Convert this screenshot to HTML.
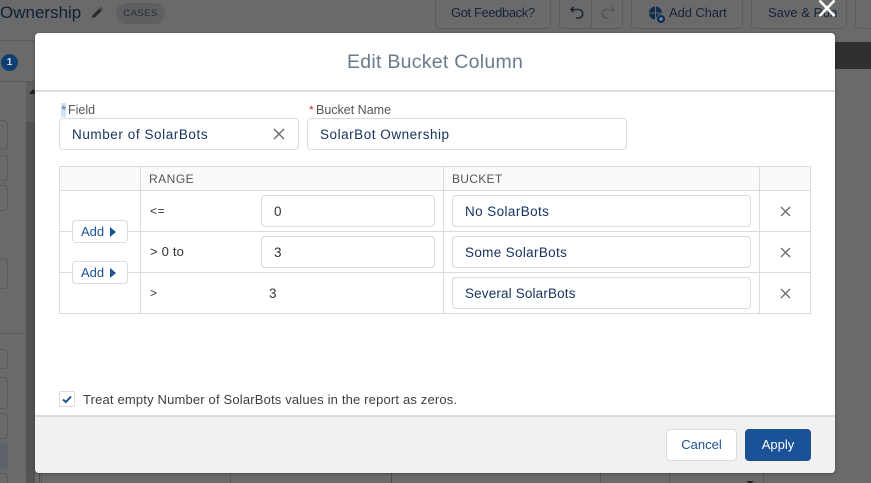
<!DOCTYPE html>
<html><head><meta charset="utf-8">
<style>
html,body{margin:0;padding:0;width:871px;height:483px;overflow:hidden}
#w{position:relative;width:871px;height:483px;overflow:hidden;background:#6a6a6a;font-family:"Liberation Sans",sans-serif;color:#16325c}
.a{position:absolute;white-space:nowrap}
.bb{position:absolute;border:1px solid #5c5c5c;border-radius:4px;box-sizing:border-box}
.t{position:absolute;white-space:nowrap;line-height:16px;font-size:13.5px}
.inp{position:absolute;box-sizing:border-box;border:1px solid #dddbda;border-radius:4px;background:#fff;height:32px}
.l{position:absolute;background:#dddbda}
.add{position:absolute;box-sizing:border-box;left:72px;width:56px;height:23px;background:#fff;border:1px solid #dddbda;border-radius:4px;color:#1b5297;font-size:13px;line-height:21px;padding-left:8px}
.add i{position:absolute;left:37px;top:5.500px;border-left:6.500px solid #1b5297;border-top:5px solid transparent;border-bottom:5px solid transparent}
svg{position:absolute;display:block}
</style></head><body><div id="w">
<!-- background page -->
<div class="a" style="left:0;top:1px;font-size:17px;line-height:24px;color:#0f2038">Ownership</div>
<svg style="left:91px;top:6px" width="13" height="13" viewBox="0 0 13 13"><path d="M1 12l.7-3L8.500 2.200l2.300 2.300L4 11.300zM9.300 1.400l.7-.4 2 2-.4.700z" fill="#2a2a2a"/></svg>
<div class="a" style="left:116px;top:3px;width:49px;height:21px;border-radius:11px;background:#5f5f5f;color:#252f3e;font-size:9.500px;line-height:21px;text-align:center;letter-spacing:.4px">CASES</div>
<div class="bb" style="left:435px;top:-5px;width:116px;height:34px"></div>
<div class="a" style="left:451px;top:5px;font-size:13px;line-height:16px;color:#16253c;letter-spacing:-.4px">Got Feedback?</div>
<div class="bb" style="left:559px;top:-5px;width:64px;height:34px"></div>
<div class="a" style="left:591px;top:0;width:1px;height:28px;background:#5c5c5c"></div>
<svg style="left:568px;top:5px" width="18" height="18" viewBox="0 0 18 18" fill="none" stroke="#1f2731" stroke-width="1.600"><path d="M3 4.500h7.500a4 4 0 0 1 0 8.500H8M5.500 2L3 4.500 5.500 7"/></svg>
<svg style="left:599px;top:5px" width="18" height="18" viewBox="0 0 18 18" fill="none" stroke="#585858" stroke-width="1.600"><path d="M15 4.500H7.500a4 4 0 0 0 0 8.500H10M12.500 2L15 4.500 12.500 7"/></svg>
<div class="bb" style="left:631px;top:-5px;width:112px;height:34px"></div>
<svg style="left:648px;top:6px" width="18" height="18" viewBox="0 0 18 18"><circle cx="7.500" cy="7" r="6.500" fill="#0f2c52"/><path d="M7.500 0v14M1 7h13" stroke="#6a6a6a" stroke-width="1"/><circle cx="13" cy="13" r="4.500" fill="#0f2c52" stroke="#6a6a6a"/><path d="M11 13h4M13 11v4" stroke="#9ab" stroke-width="1"/></svg>
<div class="a" style="left:669px;top:5px;font-size:13px;line-height:16px;color:#16253c;letter-spacing:-.1px">Add Chart</div>
<div class="bb" style="left:751px;top:-5px;width:96px;height:34px"></div>
<div class="a" style="left:768px;top:5px;font-size:13px;line-height:16px;color:#16253c">Save &amp; Run</div>
<div class="bb" style="left:855px;top:-5px;width:30px;height:34px"></div>
<div class="a" style="left:0;top:40px;width:35px;height:1px;background:#5c5c5c"></div>
<div class="a" style="left:835px;top:42px;width:36px;height:27px;background:#303030"></div>
<div class="a" style="left:0;top:81px;width:35px;height:1px;background:#5a5a5a"></div>
<div class="a" style="left:1px;top:54px;width:17px;height:17px;border-radius:50%;background:#0e3f72;color:#cfd6df;font-size:10px;font-weight:bold;line-height:17px;text-align:center">1</div>
<div class="a" style="left:26px;top:82px;width:9px;height:401px;background:#5e5e5e"></div>
<div class="a" style="left:26px;top:122px;width:9px;height:361px;background:#535353"></div>
<div class="a" style="left:29px;top:89px;border-left:4px solid transparent;border-right:4px solid transparent;border-bottom:5px solid #222"></div>
<div class="bb" style="left:-6px;top:120px;width:14px;height:30px;border-color:#5a5a5a"></div>
<div class="bb" style="left:-6px;top:155px;width:14px;height:26px;border-color:#5a5a5a"></div>
<div class="bb" style="left:-6px;top:185px;width:14px;height:26px;border-color:#5a5a5a"></div>
<div class="bb" style="left:-6px;top:258px;width:14px;height:31px;border-color:#5a5a5a"></div>
<div class="a" style="left:0;top:333px;width:24px;height:1px;background:#5a5a5a"></div>
<div class="bb" style="left:-6px;top:349px;width:14px;height:20px;border-color:#5a5a5a"></div>
<div class="bb" style="left:-6px;top:377px;width:14px;height:32px;border-color:#5a5a5a"></div>
<div class="bb" style="left:-6px;top:413px;width:14px;height:26px;border-color:#5a5a5a"></div>
<div class="bb" style="left:-6px;top:443px;width:14px;height:26px;background:#5d6368;border-color:#5d6368"></div>
<div class="bb" style="left:-6px;top:473px;width:14px;height:26px;border-color:#5a5a5a"></div>
<div class="a" style="left:39px;top:473px;width:1px;height:10px;background:#505050"></div>
<div class="a" style="left:41px;top:473px;width:1px;height:10px;background:#5a5a5a"></div>
<div class="a" style="left:230px;top:473px;width:1px;height:10px;background:#5a5a5a"></div>
<div class="a" style="left:391px;top:473px;width:1px;height:10px;background:#4c4c4c"></div>
<div class="a" style="left:600px;top:473px;width:1px;height:10px;background:#5a5a5a"></div>
<div class="a" style="left:669px;top:473px;width:1px;height:10px;background:#5a5a5a"></div>
<div class="a" style="left:746px;top:481px;border-left:4px solid transparent;border-right:4px solid transparent;border-top:3px solid #222"></div>
<div class="a" style="left:763px;top:473px;width:1px;height:10px;background:#5a5a5a"></div>

<!-- modal -->
<div class="a" style="left:35px;top:33px;width:800px;height:440px;background:#fff;border-radius:4px;box-shadow:0 1px 3px rgba(0,0,0,.3)"></div>
<svg style="left:817px;top:-1px" width="20" height="20" viewBox="0 0 20 20"><path d="M2.500 1.500L17.500 17M17.500 1.500L2.500 17" stroke="#fff" stroke-width="2.600"/></svg>
<div class="a" style="left:35px;top:90px;width:800px;height:2px;background:#dddbda"></div>
<div class="a" style="left:347px;top:50px;font-size:19.500px;line-height:24px;color:#6a7a8e;letter-spacing:.27px">Edit Bucket Column</div>

<div class="a" style="left:61px;top:103px;width:5px;height:14px;background:#cfe4f7"></div>
<div class="t" style="left:61.500px;top:102px;font-size:12px;color:#54698d">*</div>
<div class="t" style="left:68px;top:102px;font-size:12.500px;color:#555">Field</div>
<div class="t" style="left:309px;top:102px;font-size:12px;color:#c23934">*</div>
<div class="t" style="left:316px;top:102px;font-size:12.500px;color:#555">Bucket Name</div>

<div class="inp" style="left:59px;top:118px;width:240px"></div>
<div class="t" style="left:72px;top:127px;letter-spacing:.57px;color:#16325c">Number of SolarBots</div>
<svg style="left:273px;top:128px" width="12" height="12" viewBox="0 0 12 12"><path d="M1 1l10 10M11 1L1 11" stroke="#6f6f6f" stroke-width="1.500"/></svg>
<div class="inp" style="left:307px;top:118px;width:320px"></div>
<div class="t" style="left:320px;top:127px;letter-spacing:.53px;color:#16325c">SolarBot Ownership</div>

<!-- table -->
<div class="a" style="left:60px;top:167px;width:750px;height:23px;background:#fafaf9"></div>
<div class="l" style="left:59px;top:166px;width:752px;height:1px"></div>
<div class="l" style="left:59px;top:190px;width:752px;height:1px"></div>
<div class="l" style="left:140px;top:231px;width:671px;height:1px"></div>
<div class="l" style="left:140px;top:272px;width:671px;height:1px"></div>
<div class="l" style="left:59px;top:313px;width:752px;height:1px"></div>
<div class="l" style="left:59px;top:231px;width:13px;height:1px"></div>
<div class="l" style="left:128px;top:231px;width:12px;height:1px"></div>
<div class="l" style="left:59px;top:272px;width:13px;height:1px"></div>
<div class="l" style="left:128px;top:272px;width:12px;height:1px"></div>
<div class="l" style="left:59px;top:166px;width:1px;height:148px"></div>
<div class="l" style="left:140px;top:166px;width:1px;height:148px"></div>
<div class="l" style="left:443px;top:166px;width:1px;height:148px"></div>
<div class="l" style="left:759px;top:166px;width:1px;height:148px"></div>
<div class="l" style="left:810px;top:166px;width:1px;height:148px"></div>
<div class="t" style="left:149px;top:171px;font-size:12px;letter-spacing:.5px;color:#555">RANGE</div>
<div class="t" style="left:452px;top:171px;font-size:12px;letter-spacing:.3px;color:#555">BUCKET</div>

<div class="add" style="top:220px">Add<i></i></div>
<div class="add" style="top:261px">Add<i></i></div>

<div class="t" style="left:150px;top:203px;font-size:12px;letter-spacing:.6px;color:#333">&lt;=</div>
<div class="t" style="left:150px;top:244px;font-size:13px;letter-spacing:.2px;color:#333">&gt; 0 to</div>
<div class="t" style="left:150px;top:285px;font-size:12px;color:#333">&gt;</div>
<div class="inp" style="left:261px;top:195px;width:174px"></div>
<div class="inp" style="left:261px;top:236px;width:174px"></div>
<div class="t" style="left:274px;top:204px;color:#333">0</div>
<div class="t" style="left:274px;top:245px;color:#333">3</div>
<div class="t" style="left:269px;top:286px;color:#333">3</div>

<div class="inp" style="left:452px;top:195px;width:299px"></div>
<div class="inp" style="left:452px;top:236px;width:299px"></div>
<div class="inp" style="left:452px;top:277px;width:299px"></div>
<div class="t" style="left:465px;top:204px;color:#16325c;letter-spacing:.4px">No SolarBots</div>
<div class="t" style="left:465px;top:245px;color:#16325c;letter-spacing:.33px">Some SolarBots</div>
<div class="t" style="left:465px;top:286px;color:#16325c;letter-spacing:.15px">Several SolarBots</div>
<svg style="left:780px;top:206px" width="11" height="11" viewBox="0 0 11 11"><path d="M1 1l9 9M10 1l-9 9" stroke="#6f6f6f" stroke-width="1.400"/></svg>
<svg style="left:780px;top:247px" width="11" height="11" viewBox="0 0 11 11"><path d="M1 1l9 9M10 1l-9 9" stroke="#6f6f6f" stroke-width="1.400"/></svg>
<svg style="left:780px;top:288px" width="11" height="11" viewBox="0 0 11 11"><path d="M1 1l9 9M10 1l-9 9" stroke="#6f6f6f" stroke-width="1.400"/></svg>

<!-- checkbox -->
<div class="a" style="left:59px;top:391px;width:16px;height:16px;box-sizing:border-box;border:1px solid #dddbda;border-radius:2px;background:#fff"></div>
<svg style="left:62px;top:395px" width="10" height="9" viewBox="0 0 10 9"><path d="M1 4.500L3.800 7 9 1.500" fill="none" stroke="#1b5297" stroke-width="2"/></svg>
<div class="t" style="left:83px;top:392px;font-size:13px;letter-spacing:.17px;color:#3e3e3c">Treat empty Number of SolarBots values in the report as zeros.</div>

<!-- footer -->
<div class="a" style="left:35px;top:417px;width:800px;height:56px;background:#f1f1f1;border-radius:0 0 4px 4px"></div>
<div class="a" style="left:35px;top:415px;width:800px;height:2px;background:#dddbda"></div>
<div class="a" style="left:666px;top:429px;width:71px;height:32px;box-sizing:border-box;background:#fff;border:1px solid #dddbda;border-radius:4px;color:#1b5297;font-size:13px;line-height:30px;text-align:center">Cancel</div>
<div class="a" style="left:745px;top:429px;width:66px;height:32px;box-sizing:border-box;background:#1b5297;border-radius:4px;color:#fff;font-size:13px;line-height:32px;text-align:center">Apply</div>
</div></body></html>
